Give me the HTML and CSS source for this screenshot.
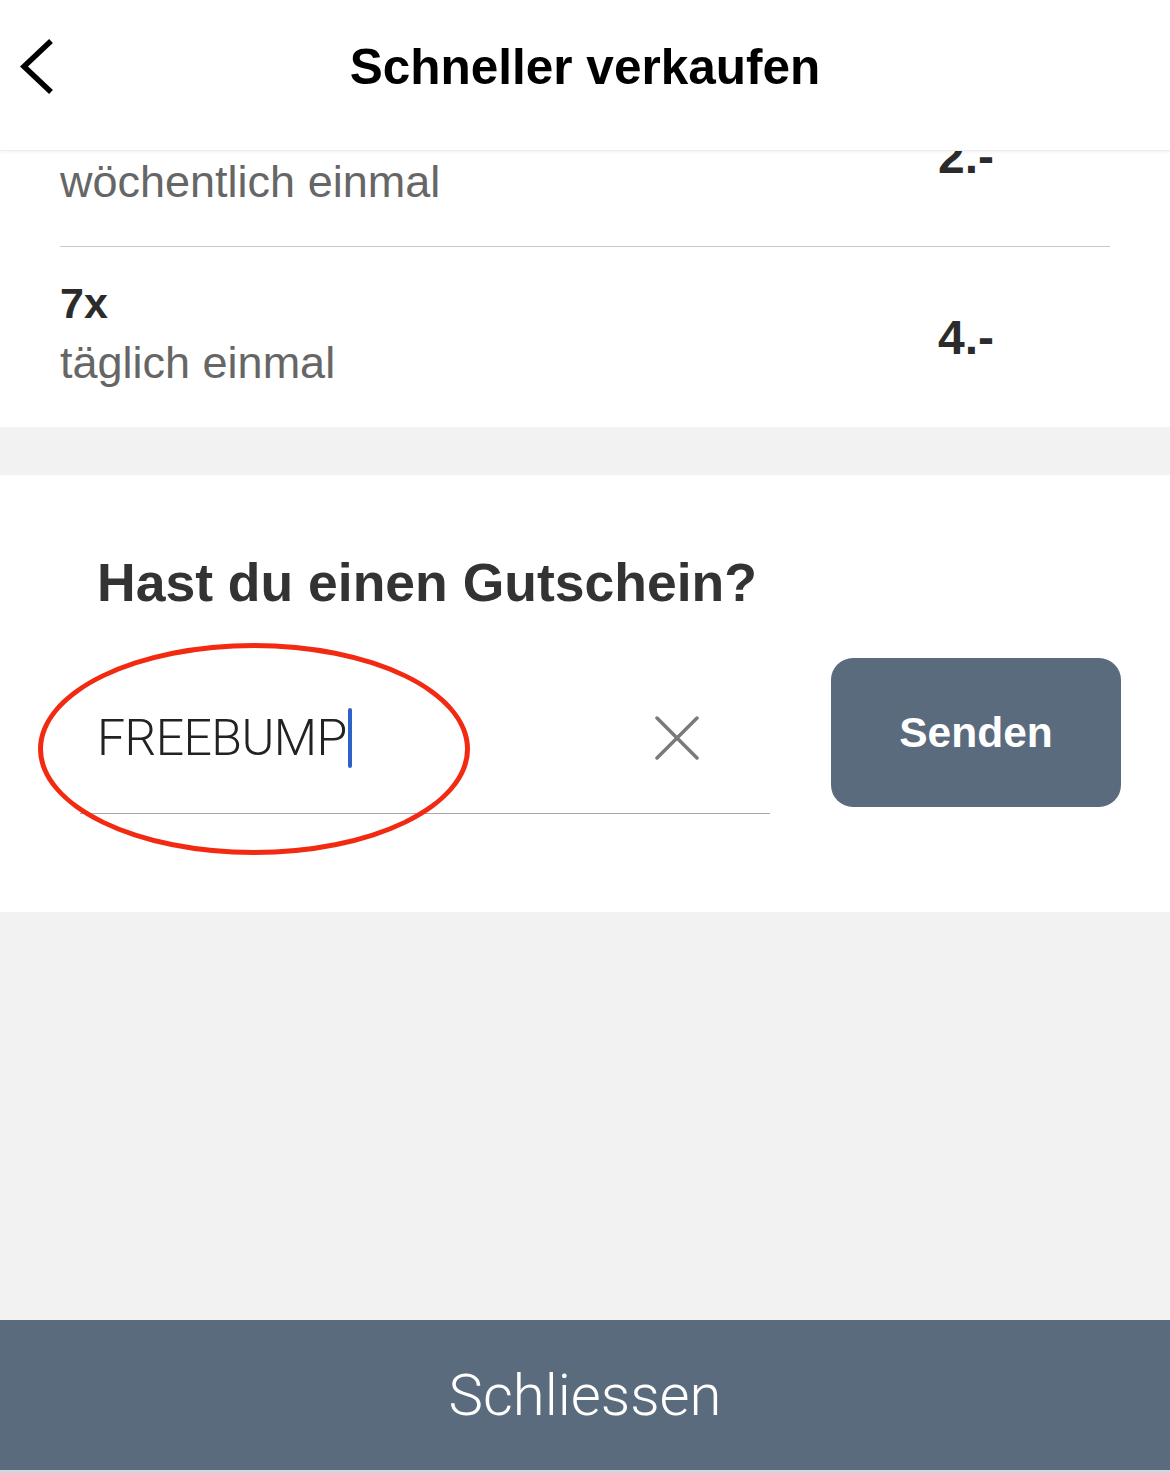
FILE: index.html
```html
<!DOCTYPE html>
<html lang="de">

<head>
    <meta charset="UTF-8">
    <meta name="viewport" content="width=device-width, initial-scale=1.0">
    <title>Schneller verkaufen</title>
    <link rel="stylesheet" href="styles.css">
</head>

<body>
    <div class="screen">
        <header class="topbar">
            <button class="back" aria-label="Zurück">
                <svg width="40" height="60" viewBox="0 0 40 60">
                    <path d="M34 3 L7 28.5 L34 54" fill="none" stroke="#000" stroke-width="5.5" />
                </svg>
            </button>
            <h1 class="title">Schneller verkaufen</h1>
        </header>

        <div class="options">
            <div class="option option-cut">
                <div class="option-text">
                    <div class="option-count">1x</div>
                    <div class="option-desc">wöchentlich einmal</div>
                </div>
                <div class="option-price">2.-</div>
            </div>
            <hr class="option-divider" />
            <div class="option">
                <div class="option-text">
                    <div class="option-count">7x</div>
                    <div class="option-desc">täglich einmal</div>
                </div>
                <div class="option-price">4.-</div>
            </div>
        </div>

        <div class="gap-band"></div>

        <section class="coupon">
            <h2 class="coupon-title">Hast du einen Gutschein?</h2>
            <div class="coupon-row">
                <div class="coupon-field">
                    <span class="coupon-code">FREEBUMP</span><span class="caret"></span>
                    <button class="clear" aria-label="Löschen">
                        <svg width="46" height="44" viewBox="0 0 46 44">
                            <path d="M3 2 L43 42 M43 2 L3 42" stroke="#7a7a7a" stroke-width="3.5" stroke-linecap="round" />
                        </svg>
                    </button>
                    <div class="highlight"></div>
                </div>
                <button class="send">Senden</button>
            </div>
        </section>

        <div class="filler"></div>

        <button class="close-bar">Schliessen</button>
    </div>
</body>

</html>
```

FILE: styles.css
```css
* {
    box-sizing: border-box;
}

html,
body {
    margin: 0;
    padding: 0;
    height: 100%;
}

body {
    font-family: "Liberation Sans", Arial, sans-serif;
    background-color: #f2f2f2;
}

button {
    font-family: inherit;
    border: none;
    background: none;
    padding: 0;
    cursor: pointer;
}

.screen {
    display: flex;
    flex-direction: column;
    min-height: 100%;
}

/* header */
.topbar {
    position: relative;
    z-index: 2;
    height: 151px;
    padding-bottom: 17px;
    display: flex;
    align-items: center;
    justify-content: center;
    background-color: white;
    border-bottom: 1px solid #ececec;
    box-shadow: 0 1px 4px rgba(0, 0, 0, 0.06);
}

.back {
    position: absolute;
    left: 17px;
    top: 38px;
    width: 40px;
    height: 60px;
}

.back svg {
    display: block;
}

.title {
    margin: 0;
    font-size: 49.5px;
    font-weight: bold;
    color: #000;
}

/* options list, scrolled under the header */
.options {
    height: 276px;
    overflow: hidden;
    background-color: white;
    padding: 0 60px;
}

.option {
    height: 180px;
    display: flex;
    align-items: center;
    justify-content: space-between;
}

.option-cut {
    margin-top: -85px;
}

.option-text {
    display: flex;
    flex-direction: column;
    gap: 8px;
    padding-bottom: 8px;
}

.option-count {
    font-size: 43px;
    font-weight: bold;
    color: #2b2b2b;
    line-height: 52px;
}

.option-desc {
    font-size: 45px;
    color: #666;
    line-height: 52px;
}

.option-price {
    margin-right: 116px;
    font-size: 48px;
    font-weight: bold;
    color: #2b2b2b;
}

.option-divider {
    margin: 0;
    border: none;
    border-top: 1px solid #c8c8c8;
}

.gap-band {
    height: 48px;
    background-color: #f2f2f2;
}

/* coupon */
.coupon {
    background-color: white;
    padding: 76px 49px 98px 80px;
}

.coupon-title {
    margin: 0 0 43px 17px;
    font-size: 53.5px;
    font-weight: bold;
    color: #333;
    line-height: 64px;
}

.coupon-row {
    display: flex;
    align-items: flex-start;
    gap: 61px;
}

.coupon-field {
    position: relative;
    width: 690px;
    height: 156px;
    padding: 5px 70px 0 17px;
    display: flex;
    align-items: center;
    border-bottom: 1.5px solid #a8a8a8;
}

.coupon-code {
    font-family: Roboto, "Liberation Sans", sans-serif;
    font-weight: 300;
    font-size: 50px;
    color: #222;
    letter-spacing: -0.6px;
}

.caret {
    width: 4px;
    height: 60px;
    margin-left: 1px;
    border-radius: 2px;
    background-color: #2f62c8;
}

.clear {
    margin-left: auto;
    width: 46px;
    height: 44px;
}

.clear svg {
    display: block;
}

/* red annotation circle */
.highlight {
    position: absolute;
    left: -42px;
    top: -15px;
    width: 432px;
    height: 212px;
    border: 5px solid #f32a12;
    border-radius: 50%;
    pointer-events: none;
}

.send {
    width: 290px;
    height: 149px;
    border-radius: 22px;
    background-color: #5a6b7e;
    color: white;
    font-size: 42.5px;
    font-weight: bold;
}

.filler {
    flex: 1;
    background-color: #f2f2f2;
}

.close-bar {
    height: 153px;
    width: 100%;
    background-color: #5a6b7e;
    border-bottom: 3px solid #cdd8e2;
    color: white;
    font-family: Roboto, "Liberation Sans", sans-serif;
    font-weight: 300;
    font-size: 58px;
}
```
